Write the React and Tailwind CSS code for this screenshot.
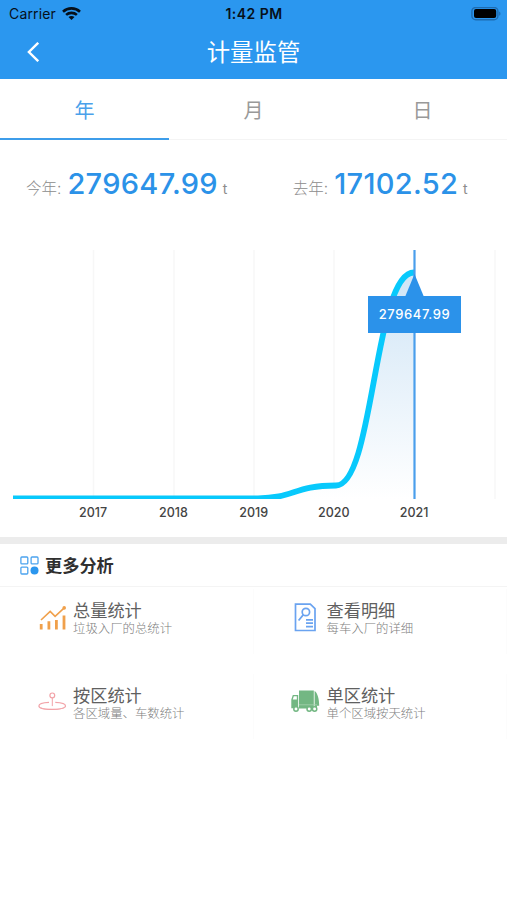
import clsx from "clsx";

const TABS = ["年", "月", "日"];
const YEARS = ["2017", "2018", "2019", "2020", "2021"];

const WifiIcon = () => (
  <svg className="h-[14px] w-[19px]" viewBox="0 0 19 14" fill="none" stroke="#06101a" strokeWidth="2.6">
    <path d="M1 4.7C5.7.3 13.3.3 18 4.7" />
    <path d="M4.1 7.9c3-2.7 7.8-2.7 10.8 0" />
    <path d="M9.5 13 6.5 10.1c1.7-1.5 4.3-1.5 6 0Z" fill="#06101a" stroke="none" />
  </svg>
);

const BatteryIcon = () => (
  <svg className="h-[14px] w-[30px]" viewBox="0 0 30 14">
    <rect x=".9" y=".5" width="26" height="12.2" rx="3.8" fill="none" stroke="#1f6cb0" strokeWidth="1.4" />
    <rect x="3" y="2.1" width="22.2" height="9" rx="2" fill="#000" />
    <path d="M28.2 4.5c1.7.7 1.7 3.6 0 4.3Z" fill="#1f6cb0" />
  </svg>
);

const GridIcon = () => (
  <svg className="h-[19px] w-[19px]" viewBox="0 0 19 19" fill="none" stroke="#4ba3ee" strokeWidth="1.3">
    <rect x=".9" y="1" width="6.9" height="6.9" rx="1" />
    <rect x="11.1" y="1" width="6.9" height="6.9" rx="1" />
    <rect x=".9" y="11.1" width="6.9" height="6.9" rx="1" />
    <circle cx="14.5" cy="14.4" r="4" fill="#2b96ee" stroke="none" />
  </svg>
);

const TrendIcon = () => (
  <svg className="h-[30px] w-[30px]" viewBox="0 0 30 30" fill="none" stroke="#f0a04b">
    <path d="m4 18 9.2-8.6 4.9 4.9L27 6.2" strokeWidth="1.6" />
    <circle cx="27.2" cy="5.9" r="1.8" fill="#f0a04b" stroke="none" />
    <path d="M4.2 22v5.6M11.9 19.2v8.4M19.4 18v9.6M27 13.4v14.2" strokeWidth="2.8" />
  </svg>
);

const DetailIcon = () => (
  <svg className="h-[30px] w-[30px]" viewBox="0 0 30 30" fill="none" stroke="#6aa3f0" strokeWidth="1.7">
    <path d="M4.5 2.2h14.8l4.7 4.4v21.9H4.5Z" />
    <circle cx="14.9" cy="10" r="3.7" />
    <path d="m12.4 12.6-4.8 5.9M15 17.8h7M15 21.2h7M15 24.6h7" />
  </svg>
);

const AreaIcon = () => (
  <svg className="h-[30px] w-[30px]" viewBox="0 0 30 30" fill="none" stroke="#f2a3a8">
    <path d="M12 15.4C5.8 15.7 1.9 17 1.9 18.9c0 2.2 6 3.5 13.3 3.5s13.3-1.3 13.3-3.5c0-1.9-4.3-3.2-10.2-3.5" strokeWidth="1.2" />
    <path d="M3.4 20.6c4.4 2.5 19.3 2.5 23.6 0" strokeWidth=".8" />
    <circle cx="15.3" cy="8.4" r="2.4" strokeWidth="1.2" />
    <path d="M15.3 10.8v8.3" strokeWidth="1" />
  </svg>
);

const TruckIcon = () => (
  <svg className="h-[30px] w-[30px]" viewBox="0 0 30 30">
    <path d="M8 3.4h14.8v18H8ZM23.6 4c2.9 1.7 4.6 8 4.6 14.8H26v2h-2.4ZM.3 12.6 1.8 8h5.4v13.3H.3Z" fill="#73b783" />
    <path d="M1.8 12.4 2.8 9.3h3v3.1Z" fill="#fff" />
    <path d="M8 17.8h18" stroke="#a5d2ae" strokeWidth=".8" />
    {[5, 18.2, 23.6].map((cx) => (
      <circle key={cx} cx={cx} cy="22" r="2.2" fill="#fff" stroke="#73b783" strokeWidth="1.5" />
    ))}
  </svg>
);

const ENTRIES = [
  { title: "总量统计", text: "垃圾入厂的总统计", Icon: TrendIcon },
  { title: "查看明细", text: "每车入厂的详细", Icon: DetailIcon },
  { title: "按区统计", text: "各区域量、车数统计", Icon: AreaIcon },
  { title: "单区统计", text: "单个区域按天统计", Icon: TruckIcon },
];

const Header = () => (
  <header className="h-[79px] bg-[#2b97ef]">
    <div className="grid h-[27px] grid-cols-3 items-center pl-[9px] pr-[6px] text-[14px] text-[#06101a]">
      <div className="flex items-center gap-[6px]">
        <span className="tracking-[0.15px]">Carrier</span>
        <WifiIcon />
      </div>
      <span className="-ml-[2px] text-center font-semibold tracking-[0.45px]">1:42 PM</span>
      <div className="flex justify-end">
        <BatteryIcon />
      </div>
    </div>
    <div className="grid h-[50px] grid-cols-[60px_1fr_60px] items-center text-white">
      <button aria-label="返回" className="pl-[27px]">
        <svg className="h-5 w-3" viewBox="0 0 12 20" fill="none" stroke="currentColor" strokeWidth="2.4">
          <path d="M11.2 .8 1.9 10l9.3 9.2" />
        </svg>
      </button>
      <h1 className="pt-px text-center text-[23.4px] leading-none">计量监管</h1>
    </div>
  </header>
);

const Total = ({ label, value }) => (
  <div className="flex items-baseline justify-center text-[15.5px] text-[#8c8c8c]">
    <span className="font-light">{label}:</span>
    <span className="ml-[6px] mr-[5px] text-[29px] font-medium leading-none tracking-[0.3px] text-[#2b92e8]">
      {value}
    </span>
    <span className="text-[14px]">t</span>
  </div>
);

// Smoothed yearly totals, with the marker on the last year
const Chart = () => (
  <div>
    <div className="relative h-[249px]">
      <svg className="h-[249px] w-full" viewBox="0 0 507 249" fill="none">
        <defs>
          <linearGradient id="area" x1="0" y1="0" x2="0" y2="1">
            <stop offset="0" stopColor="#d0e5f6" />
            <stop offset="1" stopColor="#fff" />
          </linearGradient>
          <clipPath id="plot">
            <rect width="507" height="249" />
          </clipPath>
        </defs>
        {[93.5, 174, 254, 334, 495].map((x) => (
          <path key={x} d={`M${x} 0v249`} stroke="#f7f7f7" strokeWidth="1.5" />
        ))}
        <g clipPath="url(#plot)">
          <path d="M13 248.3H258C294 248.3 294 235.5 336 235.5 374 235.5 374 22.5 414 22.5V249H13Z" fill="url(#area)" />
          <path d="M13 248.3H258C294 248.3 294 235.5 336 235.5 374 235.5 374 22.5 414 22.5" stroke="#08c9fc" strokeWidth="5.8" />
        </g>
        <path d="M414.5 0v249" stroke="#4a9eec" strokeWidth="2.2" />
        <path d="m414.5 24 9.5 23h-19Z" fill="#2b92ea" />
      </svg>
      <div className="absolute left-[368px] top-[46px] flex h-[37px] w-[93px] items-center justify-center bg-[#2b92ea] text-[13px] font-medium tracking-[0.6px] text-white">
        279647.99
      </div>
    </div>
    <div className="flex pl-[53px] pt-[5px] text-[12.5px] font-medium leading-[18px] text-[#444]">
      {YEARS.map((year) => (
        <span key={year} className="w-[80.25px] text-center">{year}</span>
      ))}
    </div>
  </div>
);

const App = () => (
  <main className="min-h-[900px] w-full bg-white font-['Inter','Noto_Sans_CJK_SC',sans-serif]">
    <Header />
    <nav className="grid h-[61px] grid-cols-3 border-b border-[#f4f4f4]">
      {TABS.map((tab, i) => (
        <button
          key={tab}
          className={clsx(
            "-mb-px border-b-[2.5px] pt-[5px] text-[20px]",
            i === 0 ? "border-[#3d9dea] text-[#4aa1ea]" : "border-transparent text-[#999]"
          )}
        >
          {tab}
        </button>
      ))}
    </nav>
    <section className="h-[397px]">
      <div className="grid h-[110px] grid-cols-2 pt-[29px]">
        <Total label="今年" value="279647.99" />
        <Total label="去年" value="17102.52" />
      </div>
      <Chart />
    </section>
    <div className="h-[7px] bg-[#ececec]" />
    <section>
      <div className="flex h-[43px] items-center gap-[6px] border-b border-[#f4f4f4] pl-5 pt-px">
        <GridIcon />
        <h2 className="text-[17.2px] font-bold leading-none text-[#303030]">更多分析</h2>
      </div>
      <div className="grid grid-cols-2 gap-y-[20px] pt-[2px]">
        {ENTRIES.map(({ title, text, Icon }) => (
          <div
            key={title}
            className="flex h-[65px] items-start gap-[6px] border-r border-[#fcfcfc] pl-[37px] pt-[13px]"
          >
            <Icon />
            <div>
              <div className="text-[17.2px] leading-[18px] text-[#606060]">{title}</div>
              <div className="text-[12.4px] font-light leading-[18px] text-[#808080]">{text}</div>
            </div>
          </div>
        ))}
      </div>
    </section>
  </main>
);

export default App;
